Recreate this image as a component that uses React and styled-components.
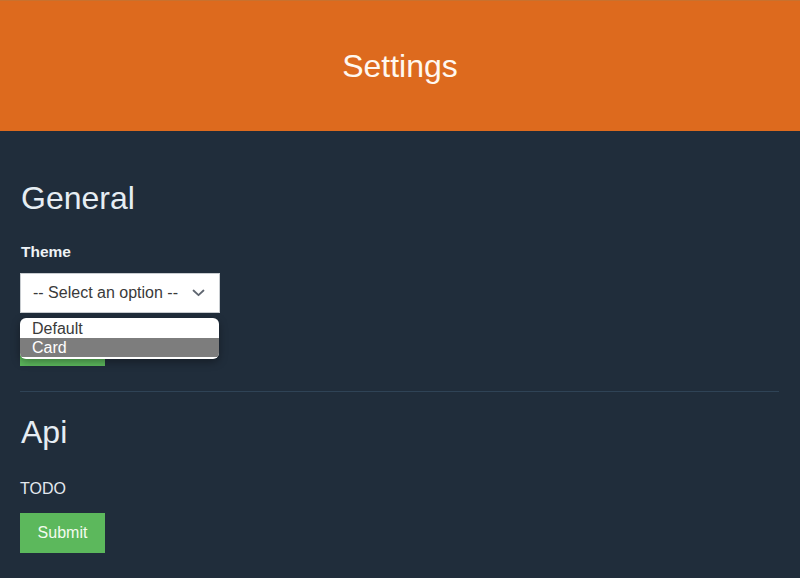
import React from "react";
import styled, { createGlobalStyle } from "styled-components";

const Global = createGlobalStyle`
  html, body { margin: 0; padding: 0; background: #202d3b; }
  body { font-family: "Liberation Sans", Arial, sans-serif; color: #e9eef3; }
  * { box-sizing: border-box; }
`;

const Page = styled.div`
  min-height: 578px;
  background: #202d3b;
`;

const Header = styled.header`
  height: 131px;
  background: #dd6a1e;
  border-top: 1px solid #c9712e;
  display: flex;
  align-items: center;
  justify-content: center;
`;

const Title = styled.h1`
  margin: 0;
  font-size: 32px;
  font-weight: 400;
  color: #fff8f0;
  line-height: 36px;
`;

const Content = styled.main`
  padding: 0 21px 0 20px;
`;

const Section = styled.section`
  display: flex;
  flex-direction: column;
  align-items: flex-start;
  padding-top: ${(p) => p.$top}px;
`;

const Heading = styled.h2`
  margin: 0 0 0 1px;
  font-size: 32px;
  font-weight: 400;
  line-height: 36px;
  color: #e6edf3;
`;

const Label = styled.label`
  margin-top: 26px;
  font-size: 15.5px;
  font-weight: 700;
  line-height: 20px;
  color: #eef2f5;
  margin-left: 1px;
`;

const Text = styled.p`
  margin: 29px 0 0;
  font-size: 16px;
  line-height: 20px;
  color: #e3e9ef;
`;

const SelectWrap = styled.div`
  position: relative;
  margin-top: 11px;
  width: 200px;
`;

const SelectBox = styled.div`
  height: 40px;
  width: 200px;
  background: #ffffff;
  border: 1px solid #c8ccd0;
  display: flex;
  align-items: center;
  justify-content: space-between;
  padding: 0 14px 0 12px;
  font-size: 16px;
  color: #3a3a3a;
`;

const Chevron = styled.svg`
  width: 13px;
  height: 8px;
  display: block;
`;

const Listbox = styled.ul`
  position: absolute;
  left: 0;
  top: 45px;
  width: 199px;
  margin: 0;
  padding: 1px 0 2px;
  list-style: none;
  background: #ffffff;
  border-radius: 6px;
  overflow: hidden;
  box-shadow: 0 3px 8px rgba(0, 0, 0, 0.35);
  z-index: 2;
`;

const Option = styled.li`
  height: 19px;
  line-height: 19px;
  padding-left: 12px;
  font-size: 16px;
  color: ${(p) => (p.$active ? "#ffffff" : "#3a3a3a")};
  background: ${(p) => (p.$active ? "#7d7d7d" : "transparent")};
`;

const Button = styled.button`
  margin-top: ${(p) => p.$top}px;
  height: 40px;
  width: 85px;
  border: none;
  border-radius: 0;
  background: #5cb85c;
  color: #f3fbef;
  font-family: "Liberation Sans", Arial, sans-serif;
  font-size: 16px;
  padding: 0;
  cursor: pointer;
`;

const Divider = styled.hr`
  margin: 25px 0 0;
  border: none;
  height: 1px;
  background: #2f4356;
`;

export default function App() {
  return (
    <Page>
      <Global />
      <Header>
        <Title>Settings</Title>
      </Header>
      <Content>
        <Section $top={49}>
          <Heading>General</Heading>
          <Label>Theme</Label>
          <SelectWrap>
            <SelectBox>
              <span>-- Select an option --</span>
              <Chevron viewBox="0 0 13 8">
                <path d="M1.5 1.5 L6.5 6.2 L11.5 1.5" fill="none" stroke="#5f6670" strokeWidth="1.8" strokeLinecap="round" strokeLinejoin="round" />
              </Chevron>
            </SelectBox>
            <Listbox>
              <Option>Default</Option>
              <Option $active>Card</Option>
            </Listbox>
          </SelectWrap>
          <Button $top={13}>Submit</Button>
        </Section>
        <Divider />
        <Section $top={22}>
          <Heading>Api</Heading>
          <Text>TODO</Text>
          <Button $top={14}>Submit</Button>
        </Section>
      </Content>
    </Page>
  );
}
